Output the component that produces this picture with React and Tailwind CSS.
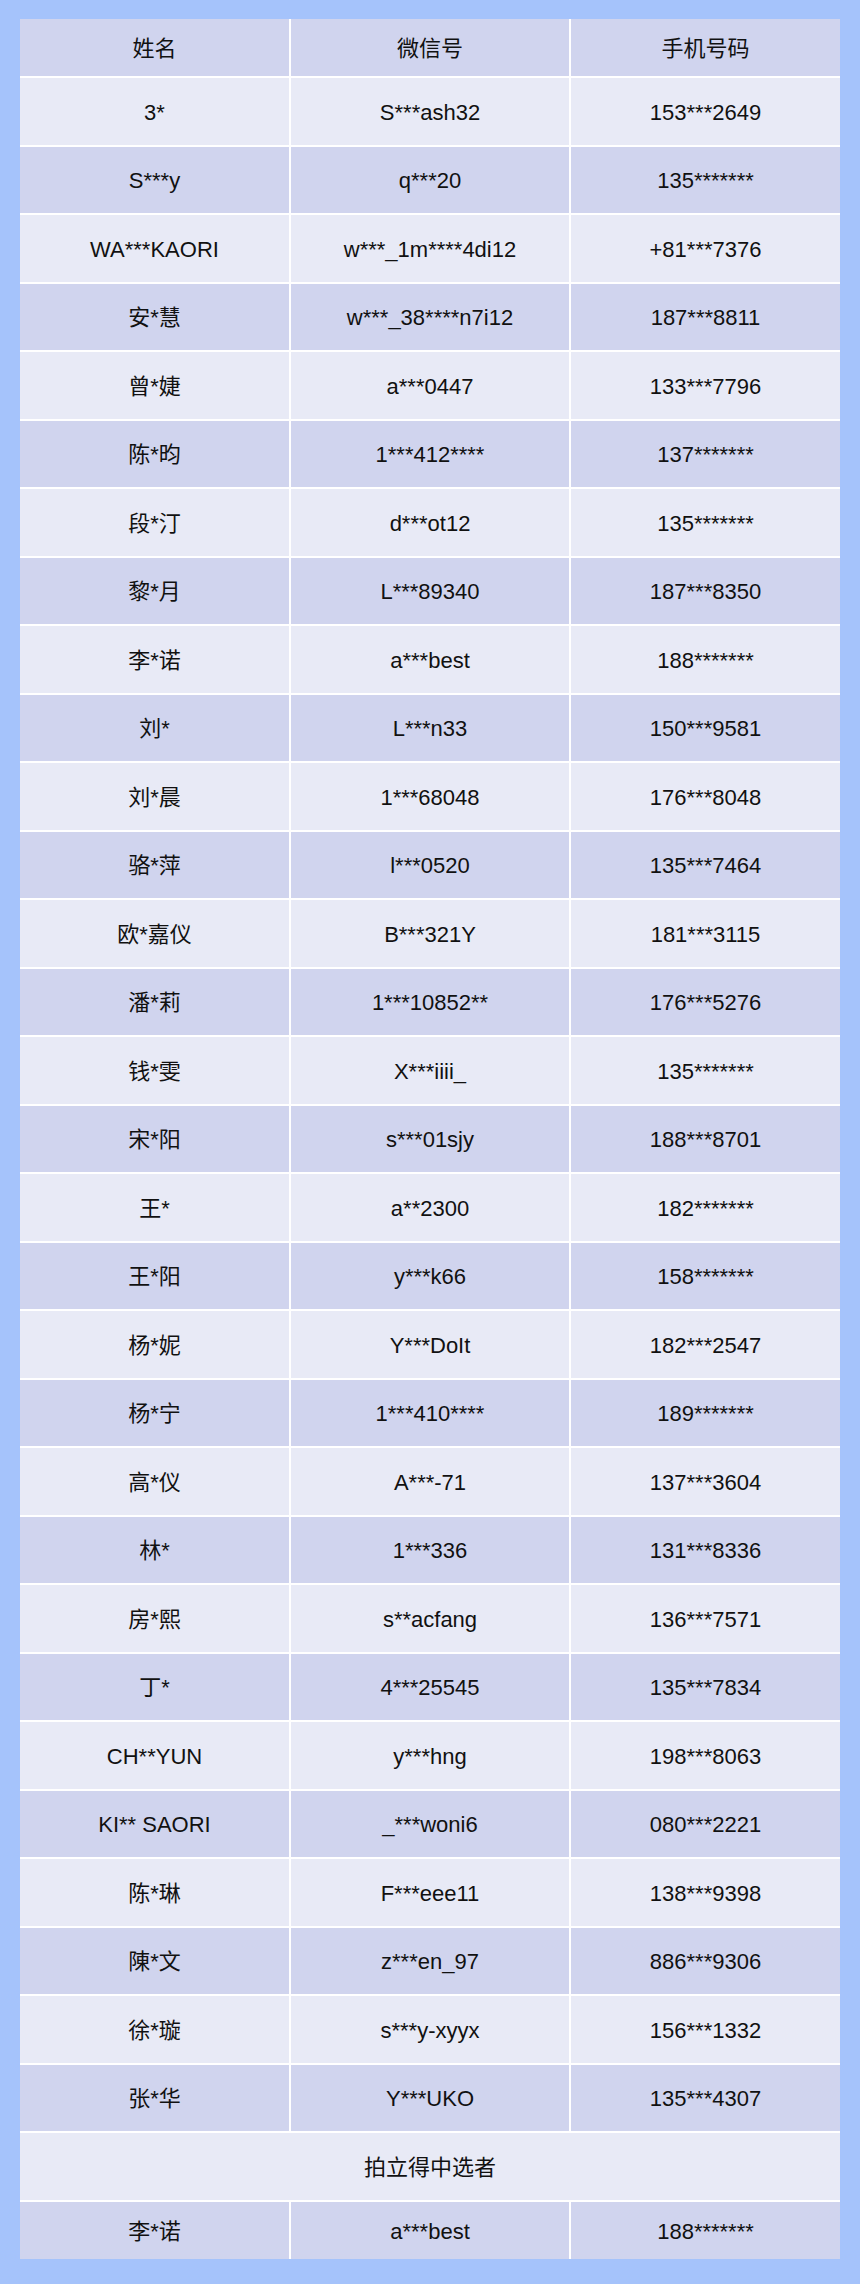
const rows = [
  ["3*", "S***ash32", "153***2649"],
  ["S***y", "q***20", "135*******"],
  ["WA***KAORI", "w***_1m****4di12", "+81***7376"],
  ["安*慧", "w***_38****n7i12", "187***8811"],
  ["曾*婕", "a***0447", "133***7796"],
  ["陈*昀", "1***412****", "137*******"],
  ["段*汀", "d***ot12", "135*******"],
  ["黎*月", "L***89340", "187***8350"],
  ["李*诺", "a***best", "188*******"],
  ["刘*", "L***n33", "150***9581"],
  ["刘*晨", "1***68048", "176***8048"],
  ["骆*萍", "l***0520", "135***7464"],
  ["欧*嘉仪", "B***321Y", "181***3115"],
  ["潘*莉", "1***10852**", "176***5276"],
  ["钱*雯", "X***iiii_", "135*******"],
  ["宋*阳", "s***01sjy", "188***8701"],
  ["王*", "a**2300", "182*******"],
  ["王*阳", "y***k66", "158*******"],
  ["杨*妮", "Y***DoIt", "182***2547"],
  ["杨*宁", "1***410****", "189*******"],
  ["高*仪", "A***-71", "137***3604"],
  ["林*", "1***336", "131***8336"],
  ["房*熙", "s**acfang", "136***7571"],
  ["丁*", "4***25545", "135***7834"],
  ["CH**YUN", "y***hng", "198***8063"],
  ["KI** SAORI", "_***woni6", "080***2221"],
  ["陈*琳", "F***eee11", "138***9398"],
  ["陳*文", "z***en_97", "886***9306"],
  ["徐*璇", "s***y-xyyx", "156***1332"],
  ["张*华", "Y***UKO", "135***4307"],
];

function Cell({ children, light, tall }) {
  return (
    <div
      className={
        "flex items-center justify-center pt-[2px] " +
        (tall ? "h-[57px] " : "h-[66.5px] ") +
        (light ? "bg-[#e8eaf6]" : "bg-[#d0d4ee]")
      }
    >
      {children}
    </div>
  );
}

export default function App() {
  return (
    <div
      className="w-[860px] h-[2284px] bg-[#a5c3fb] pt-[19px] px-[20px] text-[22px] text-[#111]"
      style={{ fontFamily: '"Liberation Sans", Arial, "Noto Sans CJK SC", sans-serif' }}
    >
      <div className="grid grid-cols-[269px_278px_269px] gap-[2px] bg-white">
        <Cell tall>姓名</Cell>
        <Cell tall>微信号</Cell>
        <Cell tall>手机号码</Cell>
        {rows.map((r, i) =>
          r.map((v, j) => (
            <Cell key={i + "-" + j} light={i % 2 === 0}>
              {v}
            </Cell>
          ))
        )}
        <div className="col-span-3 h-[66.5px] pt-[2px] flex items-center justify-center bg-[#e8eaf6]">
          拍立得中选者
        </div>
        <Cell tall>李*诺</Cell>
        <Cell tall>a***best</Cell>
        <Cell tall>188*******</Cell>
      </div>
    </div>
  );
}
